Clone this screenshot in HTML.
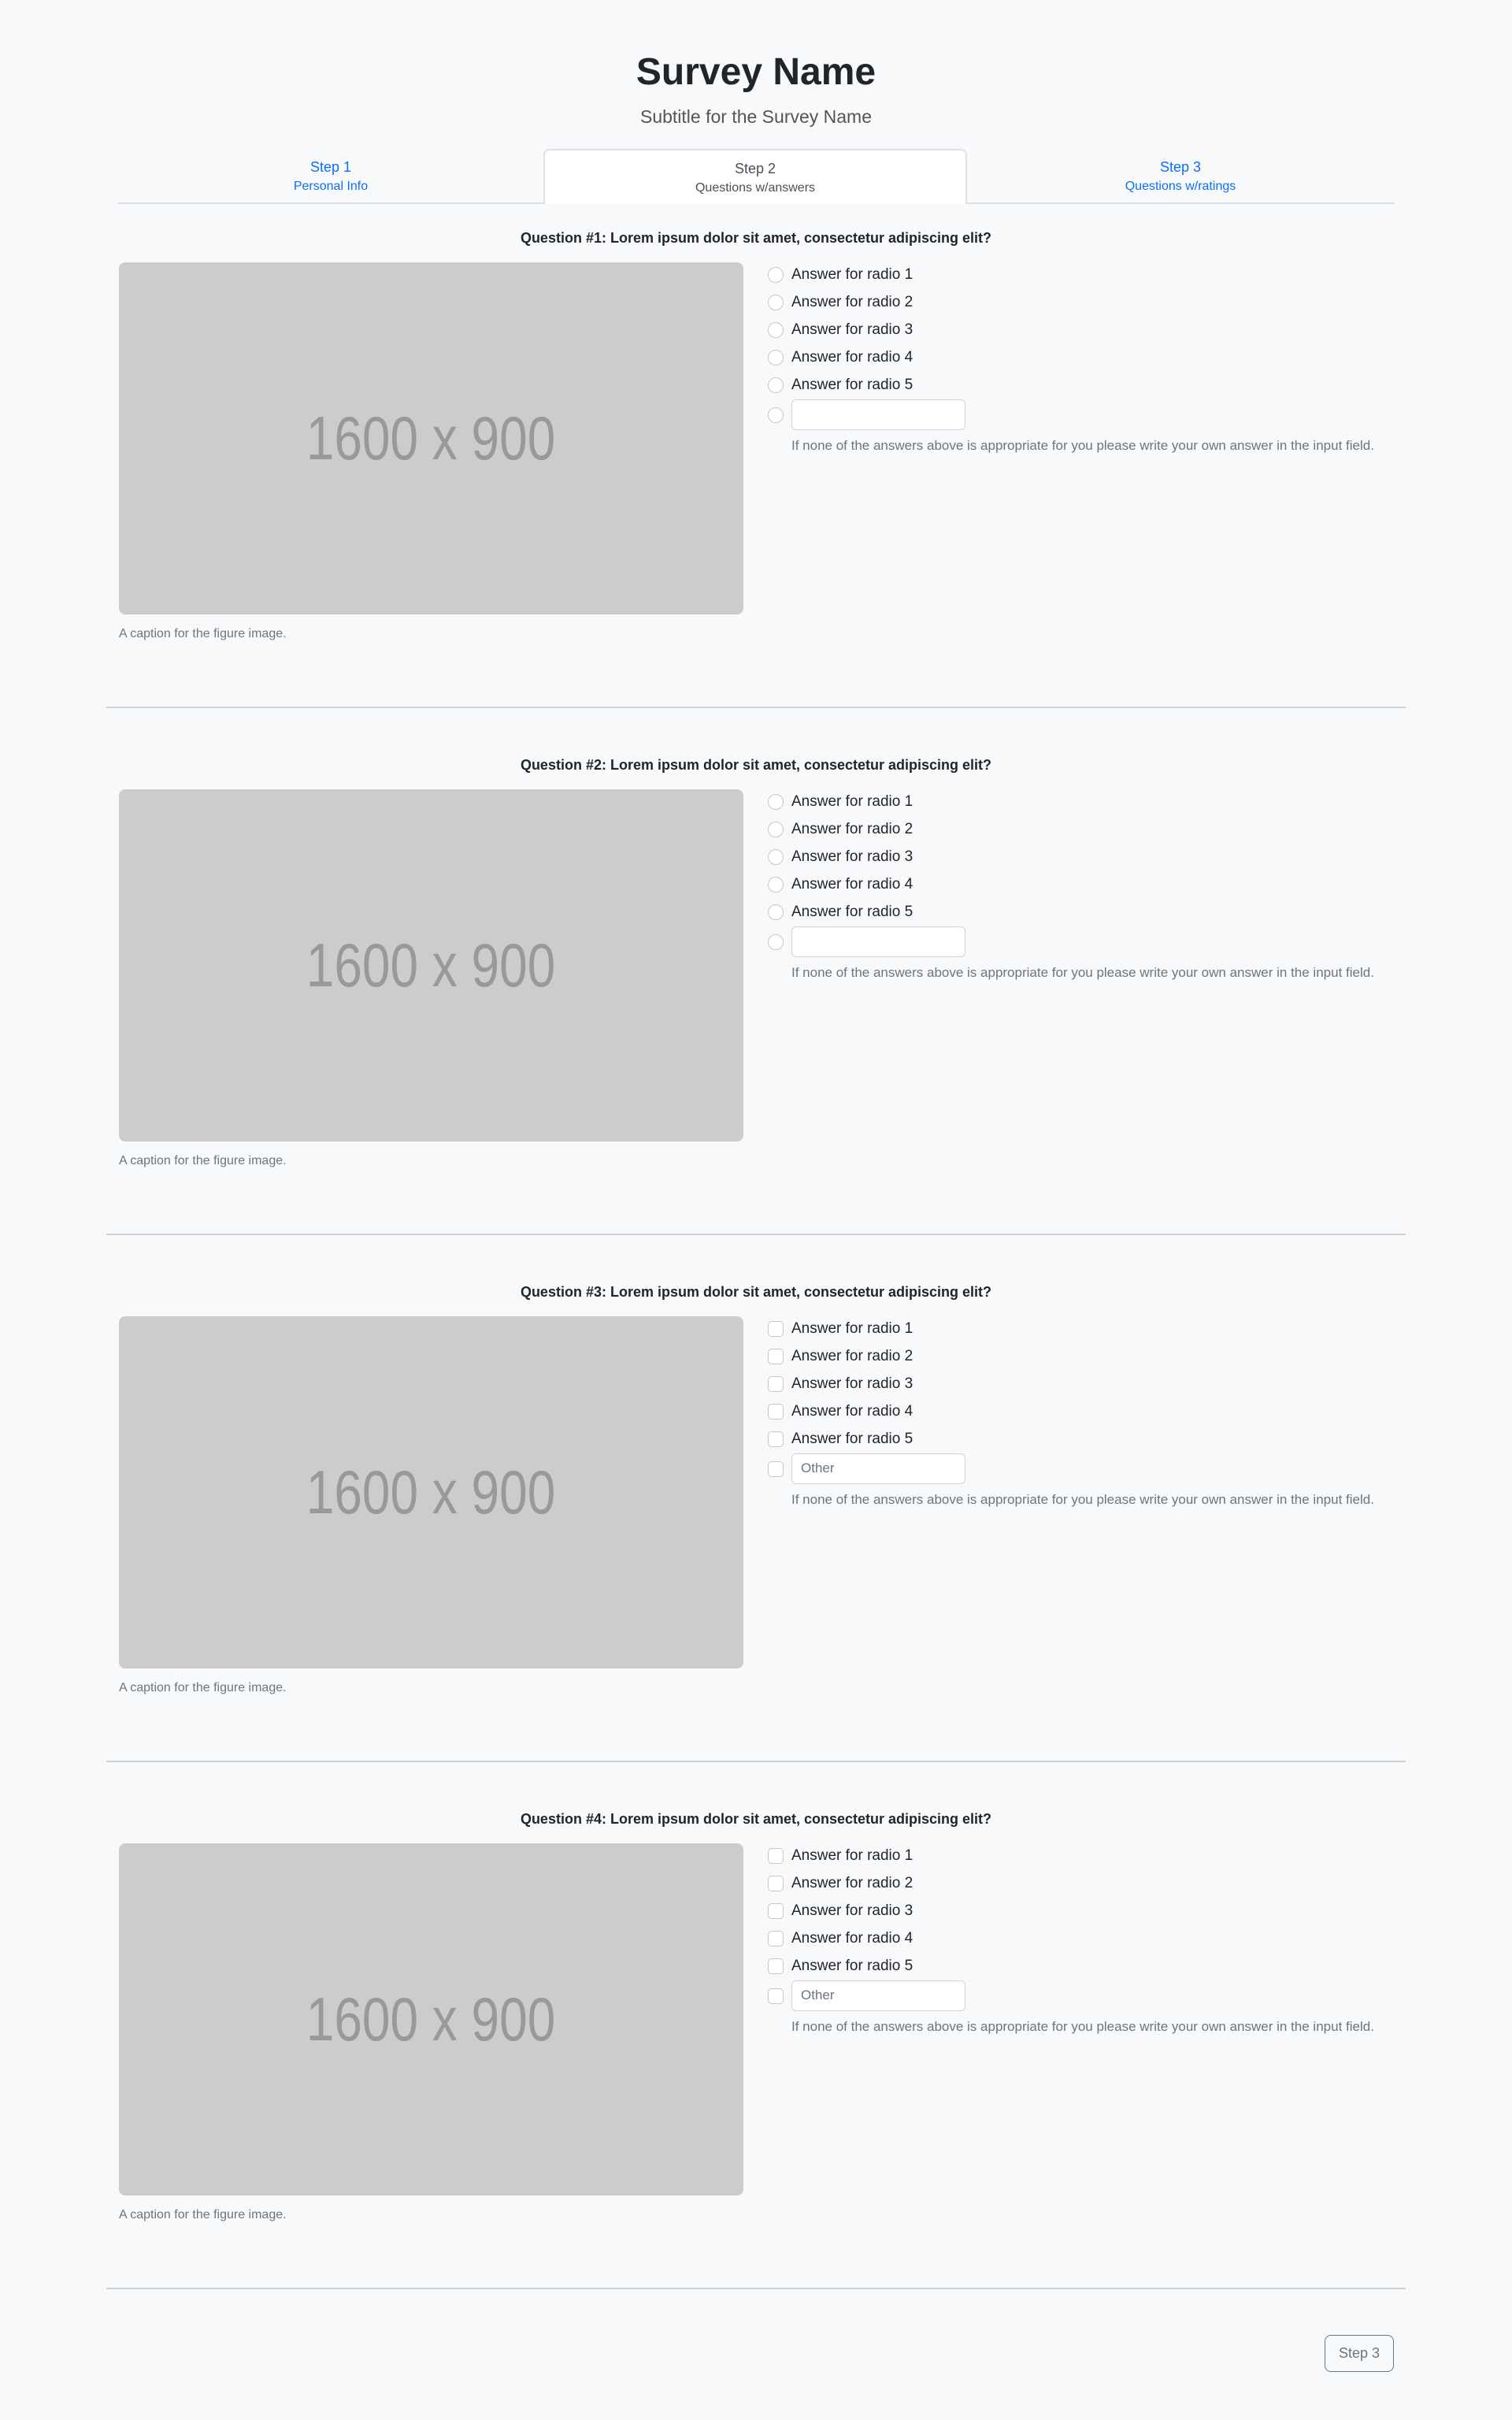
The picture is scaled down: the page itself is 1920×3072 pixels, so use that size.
<!DOCTYPE html>
<html><head><meta charset="utf-8"><style>
*{box-sizing:border-box;margin:0;padding:0}
body{width:1920px;height:3072px;background:#f8f9fa;font-family:"Liberation Sans",sans-serif;color:#212529;position:relative;overflow:hidden}
.a{position:absolute}
h1{position:absolute;left:0;width:1920px;text-align:center;top:62px;font-size:48px;font-weight:bold;line-height:60px}
.sub{left:0;width:1920px;text-align:center;top:134px;font-size:23px;color:#555;line-height:28px}
.tabline{left:150px;width:1621px;top:257px;height:2px;background:#dee2e6}
.tab{top:189px;width:538px;height:70px;text-align:center;color:#0d6efd}
.tab .s{font-size:18px;margin-top:12px;line-height:22px}
.tab .t{font-size:16px;line-height:24px;margin-top:2px}
.act{background:#fff;border:2px solid #dee2e6;border-bottom:none;border-radius:8px 8px 0 0;color:#495057}
.sec{left:0;width:1920px;height:669px}
.q{left:0;width:1920px;text-align:center;top:-12px;font-size:18px;font-weight:bold;line-height:24px}
.img{left:151px;top:31px;width:793px;height:447px;background:#ccc;border-radius:8px;text-align:center;line-height:447px;font-size:78px;color:#999}
.img b{display:inline-block;font-weight:normal;transform:scaleX(0.82)}
.cap{left:151px;top:494px;font-size:16px;color:#6c757d}
.hr{left:135px;width:1650px;top:595px;height:2px;background:#cfd2d5}
.opt{left:975px;font-size:19px;line-height:24px}
.opt i{position:absolute;left:0;top:2px;width:20px;height:20px;border:1.5px solid #c4c8cc;background:#fff;border-radius:50%}
.cb .opt i{border-radius:5px}
.opt span{position:absolute;left:30px;white-space:nowrap}
.inp{left:1005px;width:221px;height:39px;background:#fff;border:1.5px solid #ced4da;border-radius:6px;font-size:17px;color:#6c757d;padding:8px 11px;line-height:20px}
.help{left:1005px;font-size:17px;color:#6c757d;white-space:nowrap}
.btn{left:1682px;top:2964px;width:88px;height:47px;border:1.5px solid #6c757d;border-radius:8px;color:#6c757d;font-size:18px;text-align:center;line-height:44px}
</style></head><body>
<h1>Survey Name</h1>
<div class="a sub">Subtitle for the Survey Name</div>
<div class="a tabline"></div>
<div class="a tab" style="left:151px"><div class="s">Step 1</div><div class="t">Personal Info</div></div>
<div class="a tab act" style="left:690px"><div class="s">Step 2</div><div class="t">Questions w/answers</div></div>
<div class="a tab" style="left:1230px"><div class="s">Step 3</div><div class="t">Questions w/ratings</div></div>

<div class="a sec" style="top:302px">
<div class="a q">Question #1: Lorem ipsum dolor sit amet, consectetur adipiscing elit?</div>
<div class="a img"><b>1600 x 900</b></div>
<div class="a cap">A caption for the figure image.</div>
<div class="a opt" style="top:35px"><i></i><span>Answer for radio 1</span></div>
<div class="a opt" style="top:70px"><i></i><span>Answer for radio 2</span></div>
<div class="a opt" style="top:105px"><i></i><span>Answer for radio 3</span></div>
<div class="a opt" style="top:140px"><i></i><span>Answer for radio 4</span></div>
<div class="a opt" style="top:175px"><i></i><span>Answer for radio 5</span></div>
<div class="a opt" style="top:213px"><i></i></div>
<div class="a inp" style="top:205px"></div>
<div class="a help" style="top:254px">If none of the answers above is appropriate for you please write your own answer in the input field.</div>
<div class="a hr"></div>
</div>

<div class="a sec" style="top:971px">
<div class="a q">Question #2: Lorem ipsum dolor sit amet, consectetur adipiscing elit?</div>
<div class="a img"><b>1600 x 900</b></div>
<div class="a cap">A caption for the figure image.</div>
<div class="a opt" style="top:35px"><i></i><span>Answer for radio 1</span></div>
<div class="a opt" style="top:70px"><i></i><span>Answer for radio 2</span></div>
<div class="a opt" style="top:105px"><i></i><span>Answer for radio 3</span></div>
<div class="a opt" style="top:140px"><i></i><span>Answer for radio 4</span></div>
<div class="a opt" style="top:175px"><i></i><span>Answer for radio 5</span></div>
<div class="a opt" style="top:213px"><i></i></div>
<div class="a inp" style="top:205px"></div>
<div class="a help" style="top:254px">If none of the answers above is appropriate for you please write your own answer in the input field.</div>
<div class="a hr"></div>
</div>

<div class="a sec cb" style="top:1640px">
<div class="a q">Question #3: Lorem ipsum dolor sit amet, consectetur adipiscing elit?</div>
<div class="a img"><b>1600 x 900</b></div>
<div class="a cap">A caption for the figure image.</div>
<div class="a opt" style="top:35px"><i></i><span>Answer for radio 1</span></div>
<div class="a opt" style="top:70px"><i></i><span>Answer for radio 2</span></div>
<div class="a opt" style="top:105px"><i></i><span>Answer for radio 3</span></div>
<div class="a opt" style="top:140px"><i></i><span>Answer for radio 4</span></div>
<div class="a opt" style="top:175px"><i></i><span>Answer for radio 5</span></div>
<div class="a opt" style="top:213px"><i></i></div>
<div class="a inp" style="top:205px">Other</div>
<div class="a help" style="top:254px">If none of the answers above is appropriate for you please write your own answer in the input field.</div>
<div class="a hr"></div>
</div>

<div class="a sec cb" style="top:2309px">
<div class="a q">Question #4: Lorem ipsum dolor sit amet, consectetur adipiscing elit?</div>
<div class="a img"><b>1600 x 900</b></div>
<div class="a cap">A caption for the figure image.</div>
<div class="a opt" style="top:35px"><i></i><span>Answer for radio 1</span></div>
<div class="a opt" style="top:70px"><i></i><span>Answer for radio 2</span></div>
<div class="a opt" style="top:105px"><i></i><span>Answer for radio 3</span></div>
<div class="a opt" style="top:140px"><i></i><span>Answer for radio 4</span></div>
<div class="a opt" style="top:175px"><i></i><span>Answer for radio 5</span></div>
<div class="a opt" style="top:213px"><i></i></div>
<div class="a inp" style="top:205px">Other</div>
<div class="a help" style="top:254px">If none of the answers above is appropriate for you please write your own answer in the input field.</div>
<div class="a hr"></div>
</div>

<div class="a btn">Step 3</div>
</body></html>
